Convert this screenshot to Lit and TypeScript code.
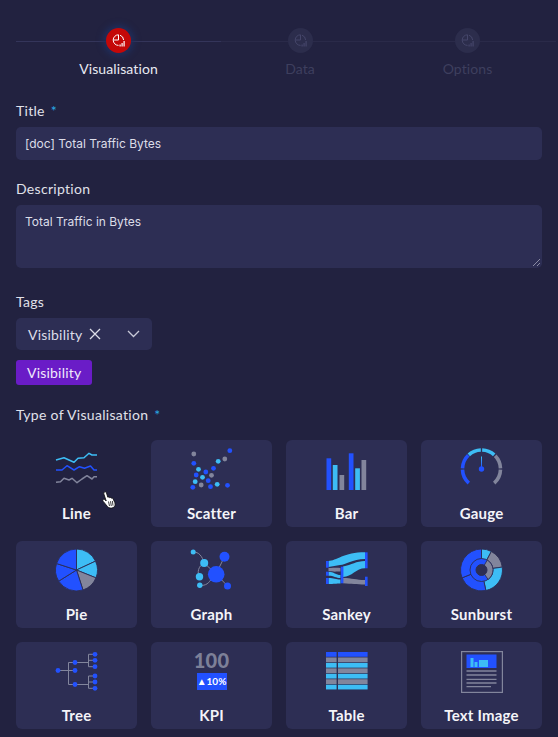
import { LitElement, css, html, svg, unsafeCSS } from "lit";
import { customElement } from "lit/decorators.js";

const BLUE = "#2251ff";
const CYAN = "#3dbdf5";
const GREY = "#82859c";
const CARD = "#2d2e54";

// point on a circle, degrees clockwise from 12 o'clock
const pt = (cx: number, cy: number, r: number, deg: number) => {
  const a = ((deg - 90) * Math.PI) / 180;
  return `${(cx + r * Math.cos(a)).toFixed(2)} ${(cy + r * Math.sin(a)).toFixed(2)}`;
};
const sector = (cx: number, cy: number, r: number, from: number, to: number) =>
  `M${cx} ${cy}L${pt(cx, cy, r, from)}A${r} ${r} 0 ${to - from > 180 ? 1 : 0} 1 ${pt(cx, cy, r, to)}Z`;
const arc = (cx: number, cy: number, r: number, from: number, to: number) =>
  `M${pt(cx, cy, r, from)}A${r} ${r} 0 ${to - from > 180 ? 1 : 0} 1 ${pt(cx, cy, r, to)}`;

const dots = (list: number[][], color: string, r = 2.4) =>
  list.map(([x, y]) => svg`<circle cx=${x} cy=${y} r=${r} fill=${color}></circle>`);

const icons: Record<string, unknown> = {
  Line: svg`
    <g fill="none" stroke-width="1.5" stroke-linejoin="round">
      <polyline stroke=${CYAN} points="0,11 8,8.7 18,13.3 22,9.3 28,8.7 33,4.3 36,6 41,6"></polyline>
      <polyline stroke=${BLUE} points="0,21 6,21 11,16.7 18,21 23.5,17.7 28.5,19.3 34.5,17 38,21 41,21"></polyline>
      <polyline stroke=${GREY} points="0,33.3 4.5,32.7 8,29.3 13,31 16,29.3 21,33.7 26,30 31,26.7 36,30 38,27.7 41,27.7"></polyline>
    </g>`,
  Scatter: svg`
    ${dots([[2.8, 5], [33.8, 10], [20.5, 26.3], [10.2, 36]], GREY)}
    ${dots([[38.8, 1.7], [2.8, 14.3], [22.5, 19.3], [14.8, 23], [5.2, 26], [17.2, 31.7], [19.5, 37.7], [36.5, 36.3], [1.8, 38.3]], BLUE)}
    ${dots([[27.2, 12.3], [7.5, 20.3], [11.5, 28.3], [4.2, 32.7], [26.2, 35.3]], CYAN)}`,
  Bar: svg`
    <rect x="0.5" y="9.3" width="4.7" height="31.7" fill=${BLUE}></rect>
    <rect x="6.8" y="16" width="4.7" height="25" fill=${CYAN}></rect>
    <rect x="13.5" y="26" width="4.7" height="15" fill=${GREY}></rect>
    <rect x="22.8" y="4.3" width="4.7" height="36.7" fill=${BLUE}></rect>
    <rect x="29.2" y="19.3" width="4.7" height="21.7" fill=${CYAN}></rect>
    <rect x="35.5" y="11" width="4.7" height="30" fill=${GREY}></rect>`,
  Gauge: svg`
    <defs>
      <linearGradient id="needle" x1="0" y1="0" x2="0" y2="1">
        <stop offset="0" stop-color=${CYAN}></stop>
        <stop offset="1" stop-color=${BLUE}></stop>
      </linearGradient>
    </defs>
    <g fill="none" stroke-width="3.6">
      <path d=${arc(20.5, 20, 19, 222, 268)} stroke=${BLUE}></path>
      <path d=${arc(20.5, 20, 19, 272, 316)} stroke=${BLUE}></path>
      <path d=${arc(20.5, 20, 19, 318, 358)} stroke=${CYAN}></path>
      <path d=${arc(20.5, 20, 19, 2, 42)} stroke=${CYAN}></path>
      <path d=${arc(20.5, 20, 19, 46, 88)} stroke=${GREY}></path>
      <path d=${arc(20.5, 20, 19, 92, 138)} stroke=${GREY}></path>
    </g>
    <rect x="20" y="7.5" width="1" height="11" fill="url(#needle)"></rect>
    <circle cx="20.5" cy="20" r="2.7" fill=${BLUE}></circle>`,
  Pie: svg`
    <g stroke=${CARD} stroke-width="0.9">
      <path d=${sector(20.5, 20, 21, 0, 65)} fill=${CYAN}></path>
      <path d=${sector(20.5, 20, 21, 65, 112)} fill=${CYAN}></path>
      <path d=${sector(20.5, 20, 21, 112, 162)} fill=${GREY}></path>
      <path d=${sector(20.5, 20, 21, 162, 238)} fill=${BLUE}></path>
      <path d=${sector(20.5, 20, 21, 238, 288)} fill=${BLUE}></path>
      <path d=${sector(20.5, 20, 21, 288, 360)} fill=${BLUE}></path>
    </g>`,
  Graph: svg`
    <g fill="none" stroke=${GREY} stroke-width="1">
      <path d="M2.2 2C8 2 11 6 13.2 13"></path>
      <path d="M13.2 13C7 16 6 23 8.5 26.7"></path>
      <path d="M13.2 13L25 24"></path>
      <path d="M25 24L33.5 6.7"></path>
      <path d="M25 24L36.5 36"></path>
      <path d="M8.8 35.3C15 36 18 33 21 28"></path>
    </g>
    <circle cx="25.2" cy="24.3" r="8.3" fill=${BLUE}></circle>
    <circle cx="33.5" cy="6.7" r="5" fill=${BLUE}></circle>
    <circle cx="36.5" cy="36" r="3.5" fill=${BLUE}></circle>
    <circle cx="13.2" cy="13" r="4" fill=${CYAN}></circle>
    <circle cx="8.5" cy="26.7" r="3.7" fill=${CYAN}></circle>
    <circle cx="8.8" cy="35.3" r="2.7" fill=${CYAN}></circle>
    <circle cx="2.2" cy="2" r="2.5" fill=${CYAN}></circle>`,
  Sankey: svg`
    <path d="M2.5 11C10 11 18 2.3 39 2.3V9C26 9 20 15 14 15L2.5 17Z" fill=${CYAN}></path>
    <path d="M17 16.500C26 15 30 11 39 11V18.300C30 18.300 26 27 17 27Z" fill=${CYAN}></path>
    <path d="M2.500 18C8 18 10 17.500 14.500 18V21.500C10 21.500 8 22 2.500 21Z" fill=${GREY}></path>
    <path d="M2.500 21.700C8 21.700 10 25 14.500 25V28C10 28 8 25.700 2.500 25.700Z" fill=${CYAN}></path>
    <path d="M2.500 28C8 28 10 29.500 14.500 29.500V33.500C10 33.500 8 34 2.500 34Z" fill=${CYAN}></path>
    <path d="M17 28C26 28 30 30 39 30V34.500C30 34.500 26 34 17 33.300Z" fill=${GREY}></path>
    <rect x="0" y="11" width="2.600" height="6.700" fill=${BLUE}></rect>
    <rect x="0" y="21.700" width="2.600" height="4" fill=${BLUE}></rect>
    <rect x="0" y="28" width="2.600" height="6" fill=${BLUE}></rect>
    <rect x="14.800" y="16.700" width="2.600" height="16.600" fill=${BLUE}></rect>
    <rect x="39" y="2.300" width="2.600" height="16" fill=${BLUE}></rect>
    <rect x="39" y="26.700" width="2.600" height="9.300" fill=${BLUE}></rect>`,
  Sunburst: svg`
    <g stroke=${CARD} stroke-width="0.9">
      <path d=${sector(20.5, 20, 21, 0, 28)} fill=${CYAN}></path>
      <path d=${sector(20.5, 20, 21, 28, 82)} fill=${GREY}></path>
      <path d=${sector(20.5, 20, 21, 82, 168)} fill=${CYAN}></path>
      <path d=${sector(20.5, 20, 21, 168, 248)} fill=${BLUE}></path>
      <path d=${sector(20.5, 20, 21, 248, 360)} fill=${BLUE}></path>
      <circle cx="20.5" cy="20" r="11.500" fill=${BLUE}></circle>
      <path d=${sector(20.5, 20, 11.5, 30, 145)} fill=${GREY}></path>
    </g>
    <circle cx="20.5" cy="20" r="5.500" fill=${CARD} stroke=${CARD}></circle>`,
  Tree: svg`
    <path d="M2 19.500H19M12.500 11.500V33.500M12.500 11.500H32.500M12.500 33.500H32.500M32.500 3.300V15.700H39.500M32.500 3.300H39.500M32.500 9.300H39.500M32.500 25V37.300H39.500M32.500 25H39.500M32.500 31H39.500" fill="none" stroke=${GREY} stroke-width="1"></path>
    ${dots([[2, 19.5], [19, 11.5], [19, 19.5], [19, 33.5], [39, 3.3], [39, 9.3], [39, 15.7], [39, 25], [39, 31], [39, 37.3]], BLUE)}`,
  Table: svg`
    ${[BLUE, GREY, CYAN, GREY, CYAN, GREY, CYAN].map(
      (c, i) => svg`
        <rect x="0" y=${1 + i * 5.45} width="10.600" height="4.750" fill=${c}></rect>
        <rect x="12" y=${1 + i * 5.45} width="29.600" height="4.750" fill=${c}></rect>`,
    )}`,
  "Text Image": svg`
    <rect x="0.600" y="0.600" width="40.800" height="40.800" fill="none" stroke=${GREY} stroke-width="1.200"></rect>
    <rect x="5.500" y="3.500" width="30" height="13.500" fill=${BLUE}></rect>
    <rect x="9.500" y="7" width="3" height="9" fill=${CYAN}></rect>
    <rect x="13.500" y="11" width="3" height="5" fill=${CYAN}></rect>
    <rect x="18" y="9" width="9" height="7" fill=${CYAN}></rect>
    <path d="M5.500 20H35.500M5.500 24H35.500M5.500 28.300H35.500M5.500 32H35.500M5.500 35.700H30" stroke=${GREY} stroke-width="1.300"></path>`,
};

const kinds = ["Line", "Scatter", "Bar", "Gauge", "Pie", "Graph", "Sankey", "Sunburst", "Tree", "KPI", "Table", "Text Image"];
const steps = ["Visualisation", "Data", "Options"];

@customElement("app-root")
export class AppRoot extends LitElement {
  static styles = css`
    :host {
      display: block;
      width: 558px;
      height: 737px;
      overflow: hidden;
      background: #222240;
      color: #e6e7ef;
      font-family: Lato, "Noto Sans", sans-serif;
    }
    .page {
      padding: 28px 16px 0;
      display: flex;
      flex-direction: column;
    }
    .steps {
      display: grid;
      grid-template-columns: 205px 158px 177px;
      height: 50px;
      margin-bottom: 24px;
    }
    .step {
      display: flex;
      flex-direction: column;
      align-items: center;
      position: relative;
      font-size: 14px;
      line-height: 17px;
      letter-spacing: 0.1px;
      color: #3e3f5e;
    }
    .step.on {
      color: #e9eaf2;
    }
    .step::before {
      content: "";
      position: absolute;
      left: 0;
      right: 0;
      top: 12.5px;
      height: 1px;
      background: #2a2a49;
    }
    .step.on::before {
      background: #34355a;
    }
    .dot {
      position: relative;
      width: 25px;
      height: 25px;
      border-radius: 50%;
      background: #2c2d4c;
      display: flex;
      align-items: center;
      justify-content: center;
      margin-bottom: 7px;
      color: #45466a;
    }
    .step.on .dot {
      background: #c40808;
      color: #fff;
      box-shadow: 0 0 6px 3px #1f2f5e;
    }
    .label {
      font-size: 14px;
      line-height: 17px;
      letter-spacing: 0.3px;
      margin-bottom: 8px;
      color: #e0e1ea;
    }
    .req {
      color: #29a9e6;
      margin-left: 2px;
    }
    .field {
      background: ${unsafeCSS(CARD)};
      border-radius: 5px;
      font-family: Inter, Roboto, sans-serif;
      font-size: 12px;
      color: #dcdde8;
      padding: 0 9px;
    }
    .title {
      height: 33px;
      line-height: 33px;
      margin-bottom: 20px;
    }
    .desc {
      height: 63px;
      line-height: 16px;
      padding-top: 9px;
      box-sizing: border-box;
      margin-bottom: 25px;
      position: relative;
    }
    .grip {
      position: absolute;
      right: 1px;
      bottom: 1px;
    }
    .select {
      width: 136px;
      height: 32px;
      box-sizing: border-box;
      padding: 0 12px;
      background: ${unsafeCSS(CARD)};
      border-radius: 5px;
      display: flex;
      align-items: center;
      font-size: 14px;
      letter-spacing: 0.2px;
      color: #dcdde8;
      margin-bottom: 10px;
    }
    .select .x {
      margin-left: 7px;
    }
    .select .chev {
      margin-left: auto;
    }
    .badge {
      align-self: flex-start;
      height: 25px;
      line-height: 25px;
      padding: 0 11px;
      border-radius: 3px;
      background: #6a1cc7;
      color: #f0e9fb;
      font-size: 14px;
      letter-spacing: 0.2px;
      margin-bottom: 21px;
    }
    .type {
      margin-bottom: 17px;
    }
    .grid {
      display: grid;
      grid-template-columns: repeat(4, 121px);
      grid-auto-rows: 87px;
      gap: 14px;
      position: relative;
    }
    .card {
      background: ${unsafeCSS(CARD)};
      border-radius: 6px;
      display: flex;
      flex-direction: column;
      align-items: center;
      padding-top: 9px;
      box-sizing: border-box;
    }
    .card.plain {
      background: transparent;
    }
    .card svg {
      display: block;
      width: 42px;
      height: 42px;
      overflow: visible;
    }
    .name {
      margin-top: 13px;
      font-size: 15px;
      line-height: 18px;
      font-weight: 700;
      letter-spacing: 0.2px;
      color: #f4f4f8;
    }
    .kpi {
      width: 42px;
      height: 42px;
      display: flex;
      flex-direction: column;
      align-items: center;
    }
    .kpi b {
      margin: -2px 0 2px;
      font-size: 20px;
      line-height: 22px;
      font-weight: 900;
      color: #7d8098;
      letter-spacing: 0.3px;
    }
    .kpi span {
      width: 30px;
      height: 17px;
      line-height: 17px;
      text-align: center;
      background: ${unsafeCSS(BLUE)};
      color: #fff;
      font-size: 10px;
      font-weight: 700;
    }
    .hand {
      position: absolute;
      left: 86px;
      top: 51px;
    }
  `;

  private stepIcon() {
    return html`<svg width="13" height="13" viewBox="0 0 13 13" fill="none">
      <path d="M6.500 .8a5.300 5.300 0 1 0 0 10.600" stroke="currentColor" stroke-width="1"></path>
      <path d="M6.500 .8V6H1.300M8 1.200a5.300 5.300 0 0 1 3.600 4.800" stroke="currentColor" stroke-width="1"></path>
      <path d="M7.500 10.500h1.200v2H7.500zM9.500 9h1.200v3.500H9.500zM11.500 7h1.200v5.500h-1.200z" fill="currentColor"></path>
    </svg>`;
  }

  private card(kind: string) {
    const body =
      kind === "KPI"
        ? html`<div class="kpi"><b>100</b><span>▲10%</span></div>`
        : html`<svg viewBox="0 0 42 42">${icons[kind]}</svg>`;
    return html`<div class="card ${kind === "Line" ? "plain" : ""}">
      ${body}
      <div class="name">${kind}</div>
    </div>`;
  }

  render() {
    return html`<div class="page">
      <div class="steps">
        ${steps.map(
          (s, i) => html`<div class="step ${i === 0 ? "on" : ""}">
            <div class="dot">${this.stepIcon()}</div>
            ${s}
          </div>`,
        )}
      </div>

      <div class="label">Title <span class="req">*</span></div>
      <div class="field title">[doc] Total Traffic Bytes</div>

      <div class="label">Description</div>
      <div class="field desc">
        Total Traffic in Bytes
        <svg class="grip" width="9" height="9" viewBox="0 0 9 9" stroke="#8a8ba3" stroke-width="1">
          <path d="M1 8L8 1M5 8L8 5"></path>
        </svg>
      </div>

      <div class="label">Tags</div>
      <div class="select">
        Visibility
        <svg class="x" width="12" height="12" viewBox="0 0 12 12" stroke="#dcdde8" stroke-width="1.300" fill="none">
          <path d="M1 1L11 11M11 1L1 11"></path>
        </svg>
        <svg class="chev" width="13" height="8" viewBox="0 0 13 8" stroke="#c8c9d8" stroke-width="1.300" fill="none">
          <path d="M1 1L6.500 6.500L12 1"></path>
        </svg>
      </div>
      <div class="badge">Visibility</div>

      <div class="label type">Type of Visualisation<span class="req"> *</span></div>
      <div class="grid">
        ${kinds.map((k) => this.card(k))}
        <svg class="hand" width="15" height="18" viewBox="0 0 15 18">
          <path
            d="M2.500 1C3.400.5 4.200 1 4.500 1.900L5.800 6.200C6.500 5.900 7.200 6 7.600 6.700C8.300 6.300 9 6.500 9.400 7.200C10.200 6.900 10.900 7.200 11.200 8L12.800 11.500C13.600 13.800 13 15.600 11.200 16.600C9.200 17.500 7 17.200 5.600 15.700L1.200 10.400C.6 9.700.7 8.900 1.300 8.500C1.900 8.100 2.600 8.300 3.100 8.800L4.200 10L1.800 2.900C1.600 2.100 1.900 1.400 2.500 1Z"
            fill="#fff"
            stroke="#111"
            stroke-width=".9"
          ></path>
          <path d="M6.500 10.500L7.500 15M8.500 10.200L9.300 15M10.400 10L11 14.600" stroke="#111" stroke-width=".8"></path>
        </svg>
      </div>
    </div>`;
  }
}
